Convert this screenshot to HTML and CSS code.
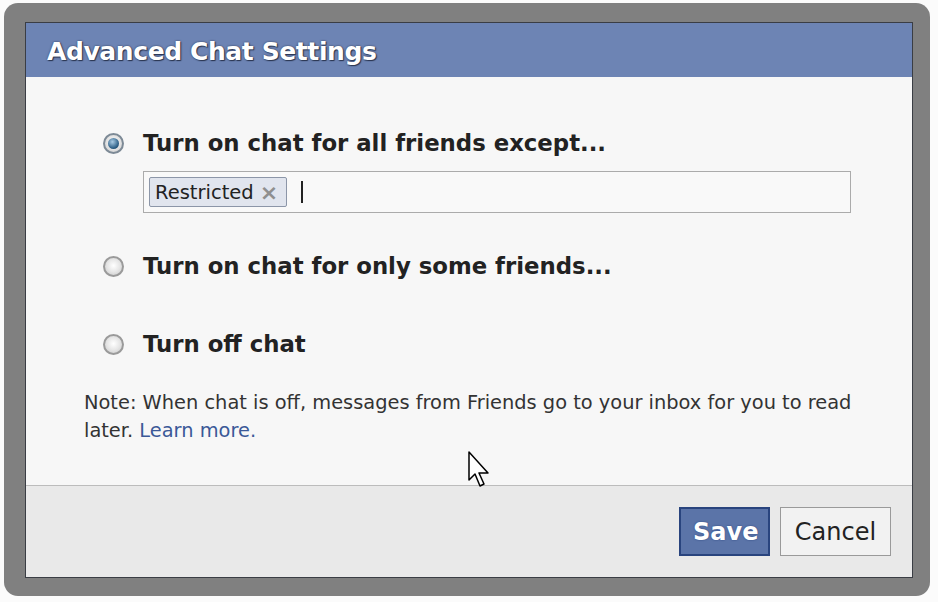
FILE: index.html
```html
<!DOCTYPE html>
<html lang="en">
<head>
  <meta charset="UTF-8" />
  <title>Advanced Chat Settings</title>
  <link rel="stylesheet" href="styles.css">
</head>
<body>

  <div class="frame">
    <div class="dialog">
      <div class="dialog-head">
        <h2>Advanced Chat Settings</h2>
      </div>

      <div class="dialog-body">
        <div class="option">
          <span class="radio checked"></span>
          <span class="option-label">Turn on chat for all friends except...</span>
        </div>
        <div class="token-box">
          <span class="token">Restricted <span class="token-x">&times;</span></span>
          <span class="caret"></span>
        </div>

        <div class="option option-2">
          <span class="radio"></span>
          <span class="option-label">Turn on chat for only some friends...</span>
        </div>

        <div class="option option-3">
          <span class="radio"></span>
          <span class="option-label">Turn off chat</span>
        </div>

        <p class="note">Note: When chat is off, messages from Friends go to your inbox for you to read<br>later. <a href="#">Learn more.</a></p>

        <svg class="pointer" width="24" height="38" viewBox="0 0 24 38">
          <path d="M1 1 L1 29 L7 23 L12 35 L16 33 L11 22 L20 22 Z" fill="#fff" stroke="#000" stroke-width="1.5" stroke-linejoin="round"/>
        </svg>
      </div>

      <div class="dialog-foot">
        <button class="btn btn-save">Save</button>
        <button class="btn btn-cancel">Cancel</button>
      </div>
    </div>
  </div>

</body>
</html>
```

FILE: styles.css
```css
body {
  margin: 0;
  background: #fbfbfb;
  font-family: Tahoma, 'DejaVu Sans', Verdana, sans-serif;
}
.frame {
  width: 888px;
  height: 556px;
  margin: 3px 0 0 4px;
  padding: 19px 17px 18px 21px;
  background: #808080;
  border-radius: 14px;
}
.dialog {
  height: 554px;
  border: 1px solid #3a3d44;
  background: #f7f7f7;
  display: flex;
  flex-direction: column;
}
.dialog-head {
  height: 54px;
  background: #6d84b4;
  display: flex;
  align-items: center;
  padding-left: 21px;
}
.dialog-head h2 {
  margin: 2px 0 0;
  color: #fff;
  font-size: 25px;
  font-weight: bold;
  letter-spacing: -0.4px;
  text-shadow: 0 0 2px #2a3550, 1px 1px 1px #2a3550;
}
.dialog-body {
  flex: 1;
  position: relative;
  padding: 52px 40px 0 59px;
}
.option {
  display: flex;
  align-items: center;
  height: 28px;
  margin-left: 18px;
}
.option-2 {
  margin-top: 39px;
}
.option-3 {
  margin-top: 50px;
}
.radio {
  width: 21px;
  height: 21px;
  border-radius: 50%;
  border: 2px solid #9a9a9a;
  background: radial-gradient(circle at 50% 45%, #fff 0, #e6e6e6 50%, #c4c4c4 100%);
  box-sizing: border-box;
  margin-right: 19px;
  position: relative;
}
.radio.checked {
  border-color: #7d8a96;
}
.radio.checked::after {
  content: "";
  position: absolute;
  left: 3px;
  top: 3px;
  width: 11px;
  height: 11px;
  border-radius: 50%;
  background: radial-gradient(circle at 40% 35%, #a9cbe4 0, #2d5f86 65%, #173650 100%);
}
.option-label {
  font-size: 22.8px;
  font-weight: bold;
  color: #222;
}
.token-box {
  margin: 14px 0 0 58px;
  width: 701px;
  height: 40px;
  border: 1px solid #ababab;
  background: #f9f9f9;
  display: flex;
  align-items: center;
  padding-left: 5px;
}
.token {
  height: 28px;
  padding: 0 8px 0 5px;
  border: 1px solid #8c96a8;
  border-radius: 2px;
  background: #e1e5ee;
  font-size: 19.5px;
  color: #222;
  display: flex;
  align-items: center;
}
.token-x {
  color: #8f8f8f;
  font-size: 22px;
  font-weight: bold;
  margin-left: 6px;
}
.caret {
  width: 2px;
  height: 22px;
  background: #222;
  margin-left: 14px;
}
.note {
  margin: 31px 0 0 -1px;
  font-size: 19.4px;
  line-height: 28px;
  color: #333;
}
.note a {
  color: #3b5998;
  text-decoration: none;
}
.pointer {
  position: absolute;
  left: 442px;
  top: 374px;
}
.dialog-foot {
  height: 91px;
  border-top: 1px solid #bcbcbc;
  background: #e9e9e9;
  display: flex;
  justify-content: flex-end;
  align-items: center;
  gap: 10px;
  padding-right: 21px;
}
.btn {
  height: 49px;
  font-family: inherit;
  font-size: 24px;
  padding: 0 12px;
  cursor: pointer;
}
.btn-save {
  width: 91px;
  background: #5b74a8;
  border: 2px solid #29447e;
  color: #fff;
  font-weight: bold;
  text-shadow: 0 0 2px #29447e;
}
.btn-cancel {
  width: 111px;
  background: #f2f2f2;
  border: 1px solid #9a9a9a;
  color: #222;
}
```
